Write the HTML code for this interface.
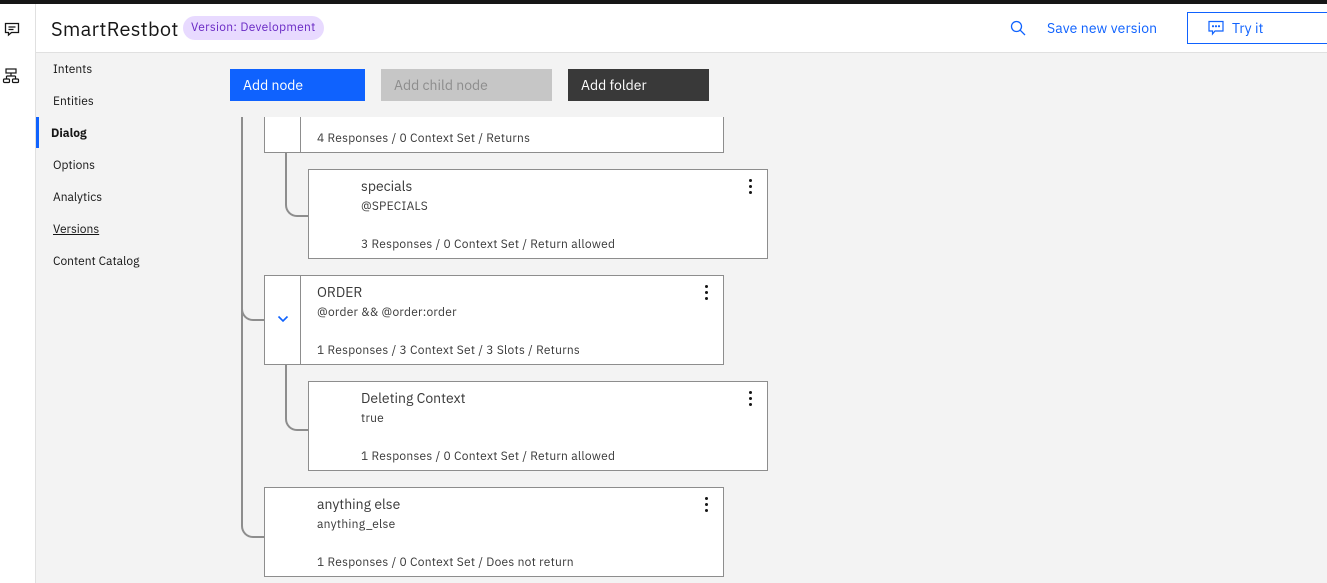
<!DOCTYPE html>
<html><head><style>
*{margin:0;padding:0;box-sizing:border-box}
body{width:1327px;height:583px;overflow:hidden;background:#f3f3f3;font-family:"IBM Plex Sans","Liberation Sans",sans-serif;position:relative;color:#161616}
.abs{position:absolute}
.topbar{left:0;top:0;width:1327px;height:4px;background:#161616}
.rail{left:0;top:4px;width:36px;height:579px;background:#fff;border-right:1px solid #e0e0e0}
.header{left:36px;top:4px;width:1291px;height:49px;background:#fff;border-bottom:1px solid #e0e0e0}
.title{left:51px;top:15px;font-size:20px;color:#161616;letter-spacing:0.3px}
.badge{left:183px;top:16px;height:24px;padding:0 8px;border-radius:12px;background:#e8daff;color:#6929c4;font-size:12px;line-height:24px;letter-spacing:0.3px}
.nav{left:53px;font-size:12px;color:#161616}
.btn{top:69px;height:32px;font-size:14px;line-height:32px;padding-left:13px}
.card{background:#fff;border:1px solid #8d8d8d}
.card .div{position:absolute;left:35px;top:0;bottom:0;border-left:1px solid #8d8d8d}
.t{font-size:14px;color:#393939}
.c{font-size:12px;color:#393939;letter-spacing:0.25px}
.dots{position:absolute;right:14px;top:9px;width:4px}
.dots i{display:block;width:3px;height:3px;border-radius:50%;background:#161616;margin-bottom:3px}
.line{border-color:#8d8d8d;border-style:solid;border-width:0}
</style></head><body>
<div class="abs topbar"></div>
<div class="abs rail"></div>
<svg class="abs" style="left:3px;top:20px" width="18" height="18" viewBox="0 0 18 18"><path d="M2.5 3.5h13v9h-7l-3 2.5v-2.5h-3z" fill="none" stroke="#161616" stroke-width="1.3"/><path d="M5.5 7h7M5.5 9.5h5" stroke="#161616" stroke-width="1.2"/></svg>
<svg class="abs" style="left:2px;top:67px" width="18" height="18" viewBox="0 0 18 18" fill="none" stroke="#161616" stroke-width="1.2"><rect x="4" y="2" width="10" height="4"/><path d="M9 6v3M4.5 9h9M4.5 9v3M13.5 9v3"/><rect x="1.5" y="12" width="6" height="3.5" rx="1"/><rect x="10.5" y="12" width="6" height="3.5" rx="1"/></svg>
<div class="abs header"></div>
<div class="abs title">SmartRestbot</div>
<div class="abs badge">Version: Development</div>
<svg class="abs" style="left:1010px;top:20px" width="16" height="16" viewBox="0 0 16 16" fill="none" stroke="#0f62fe" stroke-width="1.3"><circle cx="6.5" cy="6.5" r="5"/><path d="M10.2 10.2L15 15"/></svg>
<div class="abs" style="left:1047px;top:19px;font-size:14px;color:#0f62fe;letter-spacing:0.1px">Save new version</div>
<div class="abs" style="left:1187px;top:12px;width:150px;height:32px;border:1px solid #0f62fe;background:#fff"></div>
<svg class="abs" style="left:1207px;top:19px" width="18" height="18" viewBox="0 0 18 18" fill="none" stroke="#0f62fe" stroke-width="1.2"><path d="M2 2.5h14v9.5h-8l-2.5 3v-3h-3.5z"/><circle cx="6" cy="7.2" r=".5" fill="#0f62fe"/><circle cx="9" cy="7.2" r=".5" fill="#0f62fe"/><circle cx="12" cy="7.2" r=".5" fill="#0f62fe"/></svg>
<div class="abs" style="left:1232px;top:19px;font-size:14px;color:#0f62fe">Try it</div>

<div class="abs nav" style="top:62px">Intents</div>
<div class="abs nav" style="top:94px">Entities</div>
<div class="abs" style="left:36px;top:117px;width:3px;height:31px;background:#0f62fe"></div>
<div class="abs nav" style="top:126px;left:51px;font-weight:bold">Dialog</div>
<div class="abs nav" style="top:158px">Options</div>
<div class="abs nav" style="top:190px">Analytics</div>
<div class="abs nav" style="top:222px;text-decoration:underline">Versions</div>
<div class="abs nav" style="top:254px">Content Catalog</div>

<div class="abs btn" style="left:230px;width:135px;background:#0f62fe;color:#fff">Add node</div>
<div class="abs btn" style="left:381px;width:171px;background:#c6c6c6;color:#8d8d8d">Add child node</div>
<div class="abs btn" style="left:568px;width:141px;background:#393939;color:#fff">Add folder</div>

<div class="abs line" style="left:241px;top:117px;width:23px;height:204px;border-left-width:2px;border-bottom-width:2px;border-bottom-left-radius:12px"></div>
<div class="abs line" style="left:241px;top:300px;width:23px;height:238px;border-left-width:2px;border-bottom-width:2px;border-bottom-left-radius:12px"></div>
<div class="abs line" style="left:285px;top:152px;width:23px;height:65px;border-left-width:2px;border-bottom-width:2px;border-bottom-left-radius:12px"></div>
<div class="abs line" style="left:285px;top:364px;width:23px;height:67px;border-left-width:2px;border-bottom-width:2px;border-bottom-left-radius:12px"></div>

<div class="abs card" style="left:264px;top:110px;width:460px;height:43px"><div class="div"></div>
<div class="abs c" style="left:52px;top:20px">4 Responses / 0 Context Set / Returns</div></div>
<div class="abs" style="left:230px;top:101px;width:560px;height:16px;background:#f3f3f3"></div>

<div class="abs card" style="left:308px;top:169px;width:460px;height:90px">
<div class="abs t" style="left:52px;top:7px">specials</div>
<div class="abs c" style="left:52px;top:29px">@SPECIALS</div>
<div class="abs c" style="left:52px;top:67px">3 Responses / 0 Context Set / Return allowed</div>
<div class="dots"><i></i><i></i><i></i></div></div>

<div class="abs card" style="left:264px;top:275px;width:460px;height:90px"><div class="div"></div>
<svg class="abs" style="left:12px;top:39px" width="12" height="8" viewBox="0 0 12 8"><path d="M1.5 1.5l4.5 4.5 4.5-4.5" fill="none" stroke="#0f62fe" stroke-width="1.6"/></svg>
<div class="abs t" style="left:52px;top:7px">ORDER</div>
<div class="abs c" style="left:52px;top:29px">@order &amp;&amp; @order:order</div>
<div class="abs c" style="left:52px;top:67px">1 Responses / 3 Context Set / 3 Slots / Returns</div>
<div class="dots"><i></i><i></i><i></i></div></div>

<div class="abs card" style="left:308px;top:381px;width:460px;height:90px">
<div class="abs t" style="left:52px;top:7px">Deleting Context</div>
<div class="abs c" style="left:52px;top:29px">true</div>
<div class="abs c" style="left:52px;top:67px">1 Responses / 0 Context Set / Return allowed</div>
<div class="dots"><i></i><i></i><i></i></div></div>

<div class="abs card" style="left:264px;top:487px;width:460px;height:90px">
<div class="abs t" style="left:52px;top:7px">anything else</div>
<div class="abs c" style="left:52px;top:29px">anything_else</div>
<div class="abs c" style="left:52px;top:67px">1 Responses / 0 Context Set / Does not return</div>
<div class="dots"><i></i><i></i><i></i></div></div>
</body></html>
